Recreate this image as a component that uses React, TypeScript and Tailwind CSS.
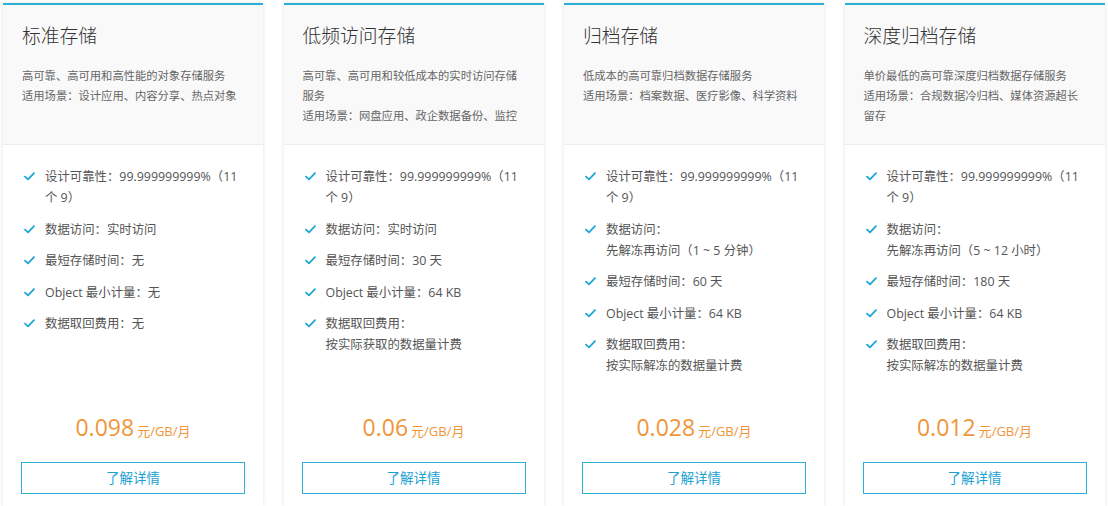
import React from "react";

type Plan = {
    title: string;
    desc: string[];
    features: string[][];
    price: string;
};

const plans: Plan[] = [
    {
        title: "标准存储",
        desc: ["高可靠、高可用和高性能的对象存储服务", "适用场景：设计应用、内容分享、热点对象"],
        features: [
            ["设计可靠性：99.999999999%（11 个 9）"],
            ["数据访问：实时访问"],
            ["最短存储时间：无"],
            ["Object 最小计量：无"],
            ["数据取回费用：无"],
        ],
        price: "0.098",
    },
    {
        title: "低频访问存储",
        desc: ["高可靠、高可用和较低成本的实时访问存储服务", "适用场景：网盘应用、政企数据备份、监控"],
        features: [
            ["设计可靠性：99.999999999%（11 个 9）"],
            ["数据访问：实时访问"],
            ["最短存储时间：30 天"],
            ["Object 最小计量：64 KB"],
            ["数据取回费用：", "按实际获取的数据量计费"],
        ],
        price: "0.06",
    },
    {
        title: "归档存储",
        desc: ["低成本的高可靠归档数据存储服务", "适用场景：档案数据、医疗影像、科学资料"],
        features: [
            ["设计可靠性：99.999999999%（11 个 9）"],
            ["数据访问：", "先解冻再访问（1 ~ 5 分钟）"],
            ["最短存储时间：60 天"],
            ["Object 最小计量：64 KB"],
            ["数据取回费用：", "按实际解冻的数据量计费"],
        ],
        price: "0.028",
    },
    {
        title: "深度归档存储",
        desc: ["单价最低的高可靠深度归档数据存储服务", "适用场景：合规数据冷归档、媒体资源超长留存"],
        features: [
            ["设计可靠性：99.999999999%（11 个 9）"],
            ["数据访问：", "先解冻再访问（5 ~ 12 小时）"],
            ["最短存储时间：180 天"],
            ["Object 最小计量：64 KB"],
            ["数据取回费用：", "按实际解冻的数据量计费"],
        ],
        price: "0.012",
    },
];

function CheckIcon() {
    return (
        <svg width="11" height="9" viewBox="0 0 11 9" className="mt-[6px] shrink-0">
            <path d="M1 4.6 L4 7.4 L10 1.2" fill="none" stroke="#1ea6d4" strokeWidth="1.8" strokeLinecap="round" strokeLinejoin="round" />
        </svg>
    );
}

function PlanCard({ plan }: { plan: Plan }) {
    return (
        <div className="w-[260px] shrink-0 bg-white border-t-2 border-[#2ab0d6] shadow-[0_0_4px_rgba(0,0,0,0.12)]">
            <div className="h-[140px] bg-[#f9f9f9] border-b border-[#ececec] px-[19px] pt-[17px]">
                <h3 className="text-[18.8px] leading-[28px] text-[#333] font-light">{plan.title}</h3>
                <div className="mt-[16px] flex flex-col">
                    {plan.desc.map((d) => (
                        <p key={d} className="text-[11.3px] leading-[20px] text-[#666]">{d}</p>
                    ))}
                </div>
            </div>
            <ul className="h-[267px] pl-[21px] pr-[18px] pt-[21px] flex flex-col gap-[10.5px]">
                {plan.features.map((f) => (
                    <li key={f.join()} className="flex gap-[10px]">
                        <CheckIcon />
                        <div className="text-[12.4px] leading-[21px] text-[#555]">
                            {f.map((line) => (
                                <div key={line}>{line}</div>
                            ))}
                        </div>
                    </li>
                ))}
            </ul>
            <div className="h-[30px] flex items-baseline justify-center text-[#f0953a]">
                <span className="text-[23px] leading-[30px]">{plan.price}</span>
                <span className="text-[13px] ml-[3px]">元/GB/月</span>
            </div>
            <div className="px-[18px] pt-[20px] pb-[20px]">
                <button className="w-full h-[32px] border border-[#2bb0d8] text-[#1ba2d2] text-[13.5px] bg-white">
                    了解详情
                </button>
            </div>
        </div>
    );
}

export default function App() {
    return (
        <div
            className="w-[1108px] h-[506px] overflow-hidden bg-white pt-[3px] pl-[3px] flex gap-[20.5px]"
            style={{ fontFamily: '"Open Sans", "Noto Sans CJK SC", sans-serif' }}
        >
            {plans.map((p) => (
                <PlanCard key={p.title} plan={p} />
            ))}
        </div>
    );
}
